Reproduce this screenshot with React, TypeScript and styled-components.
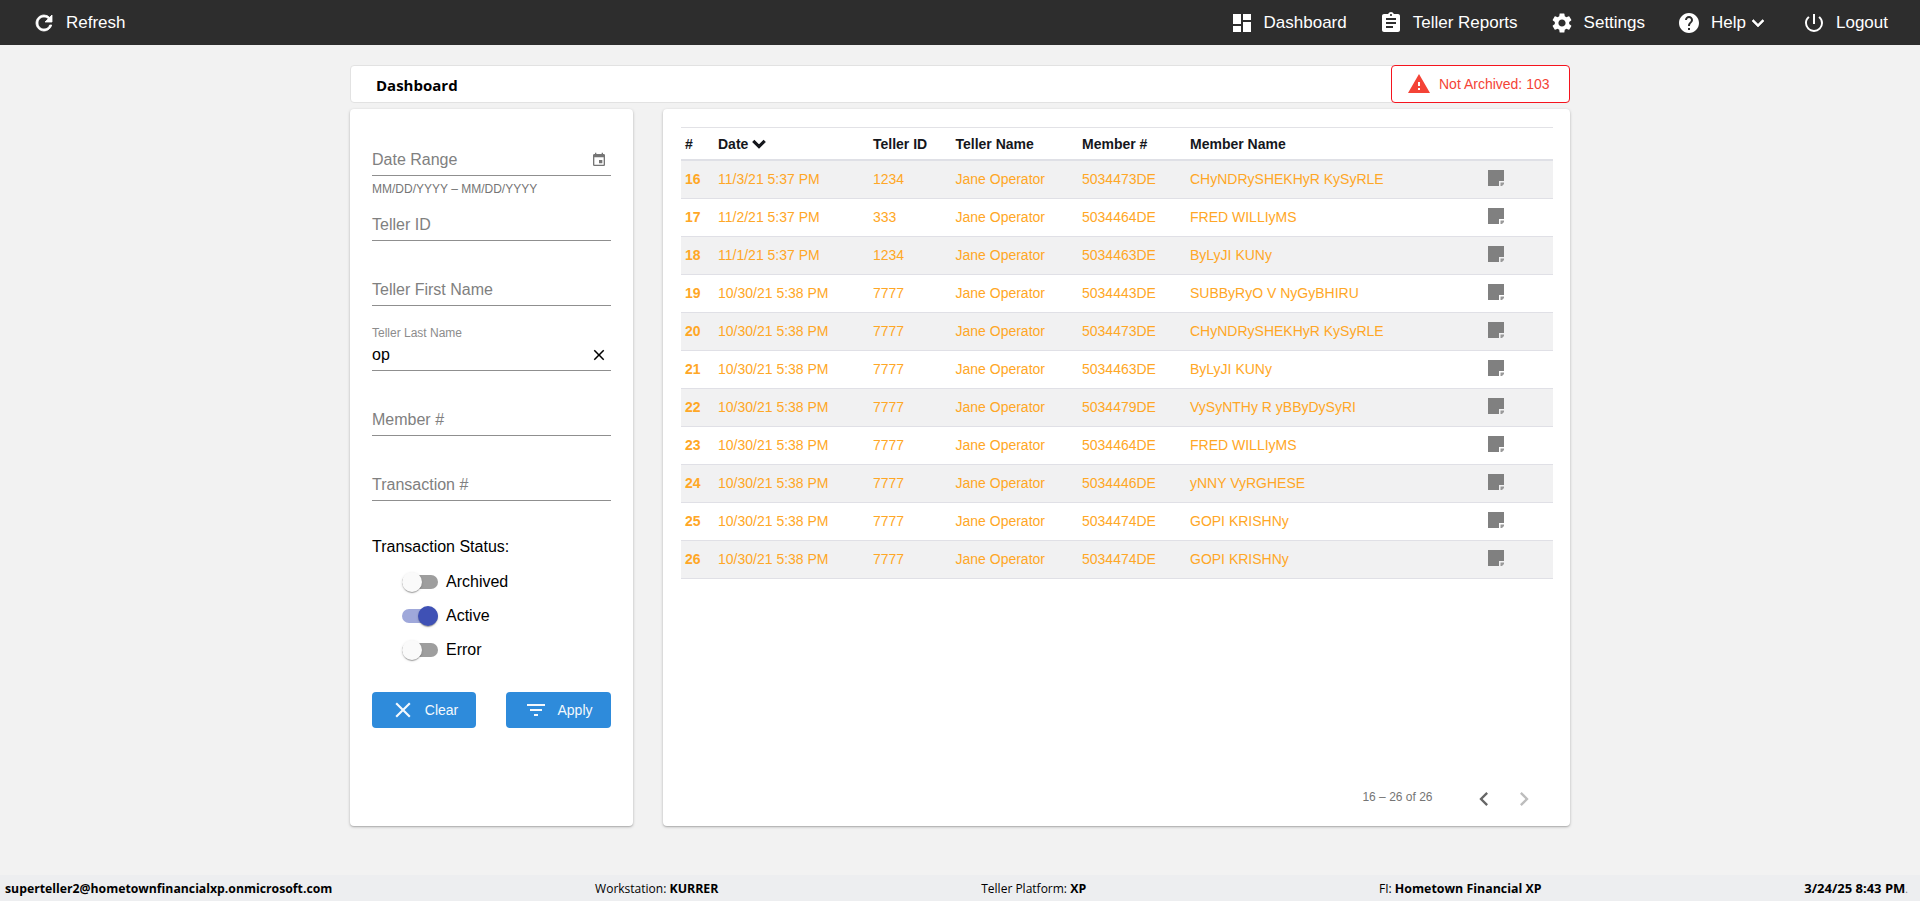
import React from "react";
import styled, { createGlobalStyle } from "styled-components";
import {
  MdRefresh, MdDashboard, MdAssignment, MdSettings, MdHelp, MdKeyboardArrowDown,
  MdPowerSettingsNew, MdWarning, MdEvent, MdClose, MdFilterList, MdChevronLeft, MdChevronRight,
} from "react-icons/md";

const Global = createGlobalStyle`
  * { box-sizing: border-box; }
  html, body { margin: 0; padding: 0; background: #f2f2f2; }
  body { font-family: "Liberation Sans", Arial, sans-serif; }
`;

const Page = styled.div`
  height: 901px;
  display: flex;
  flex-direction: column;
  overflow: hidden;
`;

const NavBar = styled.header`
  height: 45px;
  flex: none;
  background: #2d2d2d;
  color: #fff;
  display: flex;
  align-items: center;
  justify-content: space-between;
  padding: 0 32px;
`;

const NavGroup = styled.nav`
  display: flex;
  align-items: center;
  gap: 32px;
`;

const NavItem = styled.a`
  display: flex;
  align-items: center;
  gap: 10px;
  font-size: 17px;
  color: #fff;
  svg { flex: none; display: block; }
`;

const RefreshGlyph = styled(MdRefresh)`
  path:last-child { stroke: currentColor; stroke-width: 0.8; }
`;

const NavCaret = styled.span`
  margin-left: -10px;
  display: flex;
  svg path:last-child { stroke: currentColor; stroke-width: 0.6; }
`;

const Content = styled.main`
  width: 1220px;
  margin: 20px auto 0;
  flex: 1;
`;

const TitleBar = styled.div`
  height: 38px;
  background: #fff;
  border: 1px solid #e2e2e2;
  border-radius: 4px;
  display: flex;
  align-items: center;
  justify-content: space-between;
  padding-left: 25px;
`;

const Title = styled.h1`
  margin: 2px 0 0;
  font-family: "Open Sans", sans-serif;
  font-weight: 700;
  font-size: 15px;
  color: #000;
`;

const AlertBadge = styled.div`
  width: 179px;
  height: 38px;
  margin-right: -1px;
  border: 1.5px solid #f5141e;
  border-radius: 4px;
  background: #fff;
  color: #f44336;
  font-size: 14px;
  display: flex;
  align-items: center;
  gap: 8px;
  padding-left: 15px;
  line-height: 17px;
`;

const AlertText = styled.span`
  margin-top: 1px;
`;

const Columns = styled.div`
  display: grid;
  grid-template-columns: 283px 907.5px;
  gap: 29.5px;
  margin-top: 6px;
  height: 717px;
`;

const Panel = styled.section`
  background: #fff;
  border-radius: 4px;
  box-shadow: 0 1px 3px rgba(0, 0, 0, 0.25), 0 1px 1px rgba(0, 0, 0, 0.1);
`;

const FilterPanel = styled(Panel)`
  padding: 34px 22px 0;
`;

const Field = styled.div`
  height: 65px;
`;

const InputRow = styled.div`
  height: 33px;
  padding-top: 2px;
  border-bottom: 1px solid #8f8f8f;
  position: relative;
  display: flex;
  align-items: center;
  justify-content: space-between;
  font-size: 16px;
  color: #808080;
  svg { display: block; }
`;

const FloatLabel = styled.span`
  position: absolute;
  left: 0;
  top: -12px;
  font-size: 12px;
  color: #8c8c8c;
`;

const Value = styled.span`
  color: #000;
`;

const Hint = styled.div`
  font-size: 12px;
  line-height: 26px;
  color: #757575;
`;

const StatusLabel = styled.div`
  margin-top: 5px;
  font-size: 16px;
  line-height: 18px;
  color: #000;
`;

const ToggleList = styled.div`
  margin-top: 9px;
  padding-left: 30px;
`;

const ToggleRow = styled.div`
  height: 34px;
  display: flex;
  align-items: center;
  gap: 8px;
  font-size: 16px;
  color: #000;
`;

const Track = styled.span<{ $on?: boolean }>`
  position: relative;
  width: 36px;
  height: 14px;
  border-radius: 7px;
  background: ${(p) => (p.$on ? "#9fa8da" : "#9e9e9e")};
`;

const Thumb = styled.span<{ $on?: boolean }>`
  position: absolute;
  top: -3px;
  left: ${(p) => (p.$on ? "16px" : "0")};
  width: 20px;
  height: 20px;
  border-radius: 50%;
  background: ${(p) => (p.$on ? "#3f51b5" : "#fafafa")};
  box-shadow: 0 2px 1px -1px rgba(0, 0, 0, 0.2), 0 1px 1px rgba(0, 0, 0, 0.14), 0 1px 3px rgba(0, 0, 0, 0.12);
`;

const Actions = styled.div`
  margin-top: 25px;
  display: flex;
  justify-content: space-between;
`;

const ActionButton = styled.button<{ $w: number }>`
  width: ${(p) => p.$w}px;
  height: 36px;
  border: 0;
  border-radius: 4px;
  background: #2e8bdb;
  color: #f4f9fd;
  font: 14px "Liberation Sans", Arial, sans-serif;
  display: flex;
  align-items: center;
  justify-content: center;
  gap: 9px;
  padding: 0;
  svg { display: block; }
`;

const TablePanel = styled(Panel)`
  padding: 18px 17.5px 7px 18.5px;
  display: flex;
  flex-direction: column;
`;

const Grid = styled.div`
  display: grid;
  grid-template-columns: 33px 155px 82.5px 126.5px 108px 297.5px 1fr;
  align-items: center;
`;

const HeadRow = styled(Grid)`
  height: 34px;
  border-top: 1px solid #e2e2e6;
  border-bottom: 2px solid #dfe0e6;
  font-size: 14px;
  font-weight: 700;
  color: #15171c;
`;

const HeadCell = styled.div`
  padding-left: 4px;
  display: flex;
  align-items: center;
`;

const SortGlyph = styled(MdKeyboardArrowDown)`
  margin: -4px 0 -4px -1px;
  path:last-child { stroke: currentColor; stroke-width: 1.2; }
`;

const Row = styled(Grid)<{ $odd: boolean }>`
  height: 38px;
  padding-bottom: 2px;
  border-bottom: 1px solid #e0e0e6;
  background: ${(p) => (p.$odd ? "#f1f1f2" : "#fff")};
  font-size: 14px;
  color: #ffa726;
`;

const Cell = styled.div<{ $bold?: boolean }>`
  padding-left: 4px;
  font-weight: ${(p) => (p.$bold ? 700 : 400)};
  white-space: nowrap;
`;

const NoteCell = styled.div`
  padding-left: 4px;
  svg { display: block; margin-top: -1px; }
`;

const Pager = styled.div`
  margin-top: auto;
  height: 40px;
  display: flex;
  align-items: center;
  justify-content: flex-end;
  padding-right: 9px;
  color: #757575;
  font-size: 12px;
`;

const PagerText = styled.span`
  margin-right: 31px;
  margin-top: -4px;
`;

const PagerButton = styled.span<{ $off?: boolean }>`
  width: 40px;
  height: 40px;
  display: flex;
  align-items: center;
  justify-content: center;
  color: ${(p) => (p.$off ? "#bdbdbd" : "#666")};
`;

const Footer = styled.footer`
  height: 26px;
  flex: none;
  background: #edeef0;
  display: flex;
  align-items: center;
  justify-content: space-between;
  padding: 0 12px 0 5px;
  font-family: "Open Sans", sans-serif;
  font-size: 12px;
  color: #000;
`;

const FootItem = styled.span<{ $trail?: number; $size?: number }>`
  padding-right: ${(p) => p.$trail ?? 0}px;
  white-space: nowrap;
  b { font-weight: 700; font-size: ${(p) => p.$size ?? 12.4}px; }
`;

const FootDot = styled.span`
  color: #777;
  font-size: 10px;
`;

const NoteIcon = () => (
  <svg width="16" height="16" viewBox="0 0 16 16" aria-hidden="true">
    <path d="M0 0H16V11H11V16H0Z" fill="#808080" />
    <path d="M12.5 12.5H16V14L14 16H12.5Z" fill="#9a9a9a" />
  </svg>
);

const rows = [
  ["16", "11/3/21 5:37 PM", "1234", "5034473DE", "CHyNDRySHEKHyR KySyRLE"],
  ["17", "11/2/21 5:37 PM", "333", "5034464DE", "FRED WILLIyMS"],
  ["18", "11/1/21 5:37 PM", "1234", "5034463DE", "ByLyJI KUNy"],
  ["19", "10/30/21 5:38 PM", "7777", "5034443DE", "SUBByRyO V NyGyBHIRU"],
  ["20", "10/30/21 5:38 PM", "7777", "5034473DE", "CHyNDRySHEKHyR KySyRLE"],
  ["21", "10/30/21 5:38 PM", "7777", "5034463DE", "ByLyJI KUNy"],
  ["22", "10/30/21 5:38 PM", "7777", "5034479DE", "VySyNTHy R yBByDySyRI"],
  ["23", "10/30/21 5:38 PM", "7777", "5034464DE", "FRED WILLIyMS"],
  ["24", "10/30/21 5:38 PM", "7777", "5034446DE", "yNNY VyRGHESE"],
  ["25", "10/30/21 5:38 PM", "7777", "5034474DE", "GOPI KRISHNy"],
  ["26", "10/30/21 5:38 PM", "7777", "5034474DE", "GOPI KRISHNy"],
];

export default function App() {
  return (
    <Page>
      <Global />
      <NavBar>
        <NavGroup>
          <NavItem><RefreshGlyph size={24} />Refresh</NavItem>
        </NavGroup>
        <NavGroup>
          <NavItem><MdDashboard size={24} />Dashboard</NavItem>
          <NavItem><MdAssignment size={24} />Teller Reports</NavItem>
          <NavItem><MdSettings size={24} />Settings</NavItem>
          <NavItem>
            <MdHelp size={24} />Help
            <NavCaret><MdKeyboardArrowDown size={24} /></NavCaret>
          </NavItem>
          <NavItem><MdPowerSettingsNew size={24} />Logout</NavItem>
        </NavGroup>
      </NavBar>
      <Content>
        <TitleBar>
          <Title>Dashboard</Title>
          <AlertBadge><MdWarning size={24} color="#f44336" /><AlertText>Not Archived: 103</AlertText></AlertBadge>
        </TitleBar>
        <Columns>
          <FilterPanel>
            <Field>
              <InputRow>Date Range<MdEvent size={16} color="#757575" style={{ marginRight: 4 }} /></InputRow>
              <Hint>MM/DD/YYYY – MM/DD/YYYY</Hint>
            </Field>
            <Field><InputRow>Teller ID</InputRow></Field>
            <Field><InputRow>Teller First Name</InputRow></Field>
            <Field>
              <InputRow>
                <FloatLabel>Teller Last Name</FloatLabel>
                <Value>op</Value>
                <MdClose size={18} color="#000" style={{ marginRight: 3 }} />
              </InputRow>
            </Field>
            <Field><InputRow>Member #</InputRow></Field>
            <Field><InputRow>Transaction #</InputRow></Field>
            <StatusLabel>Transaction Status:</StatusLabel>
            <ToggleList>
              <ToggleRow><Track><Thumb /></Track>Archived</ToggleRow>
              <ToggleRow><Track $on><Thumb $on /></Track>Active</ToggleRow>
              <ToggleRow><Track><Thumb /></Track>Error</ToggleRow>
            </ToggleList>
            <Actions>
              <ActionButton $w={104}><MdClose size={26} />Clear</ActionButton>
              <ActionButton $w={105}><MdFilterList size={24} />Apply</ActionButton>
            </Actions>
          </FilterPanel>
          <TablePanel>
            <HeadRow>
              <HeadCell>#</HeadCell>
              <HeadCell>Date<SortGlyph size={24} /></HeadCell>
              <HeadCell>Teller ID</HeadCell>
              <HeadCell>Teller Name</HeadCell>
              <HeadCell>Member #</HeadCell>
              <HeadCell>Member Name</HeadCell>
              <HeadCell />
            </HeadRow>
            {rows.map((r, i) => (
              <Row key={r[0]} $odd={i % 2 === 0}>
                <Cell $bold>{r[0]}</Cell>
                <Cell>{r[1]}</Cell>
                <Cell>{r[2]}</Cell>
                <Cell>Jane Operator</Cell>
                <Cell>{r[3]}</Cell>
                <Cell>{r[4]}</Cell>
                <NoteCell><NoteIcon /></NoteCell>
              </Row>
            ))}
            <Pager>
              <PagerText>16 – 26 of 26</PagerText>
              <PagerButton><MdChevronLeft size={28} /></PagerButton>
              <PagerButton $off><MdChevronRight size={28} /></PagerButton>
            </Pager>
          </TablePanel>
        </Columns>
      </Content>
      <Footer>
        <FootItem $size={12.25}><b>superteller2@hometownfinancialxp.onmicrosoft.com</b></FootItem>
        <FootItem>Workstation: <b>KURRER</b></FootItem>
        <FootItem $trail={30}>Teller Platform: <b>XP</b></FootItem>
        <FootItem>FI: <b>Hometown Financial XP</b></FootItem>
        <FootItem $size={13}><b>3/24/25 8:43 PM</b><FootDot>.</FootDot></FootItem>
      </Footer>
    </Page>
  );
}
